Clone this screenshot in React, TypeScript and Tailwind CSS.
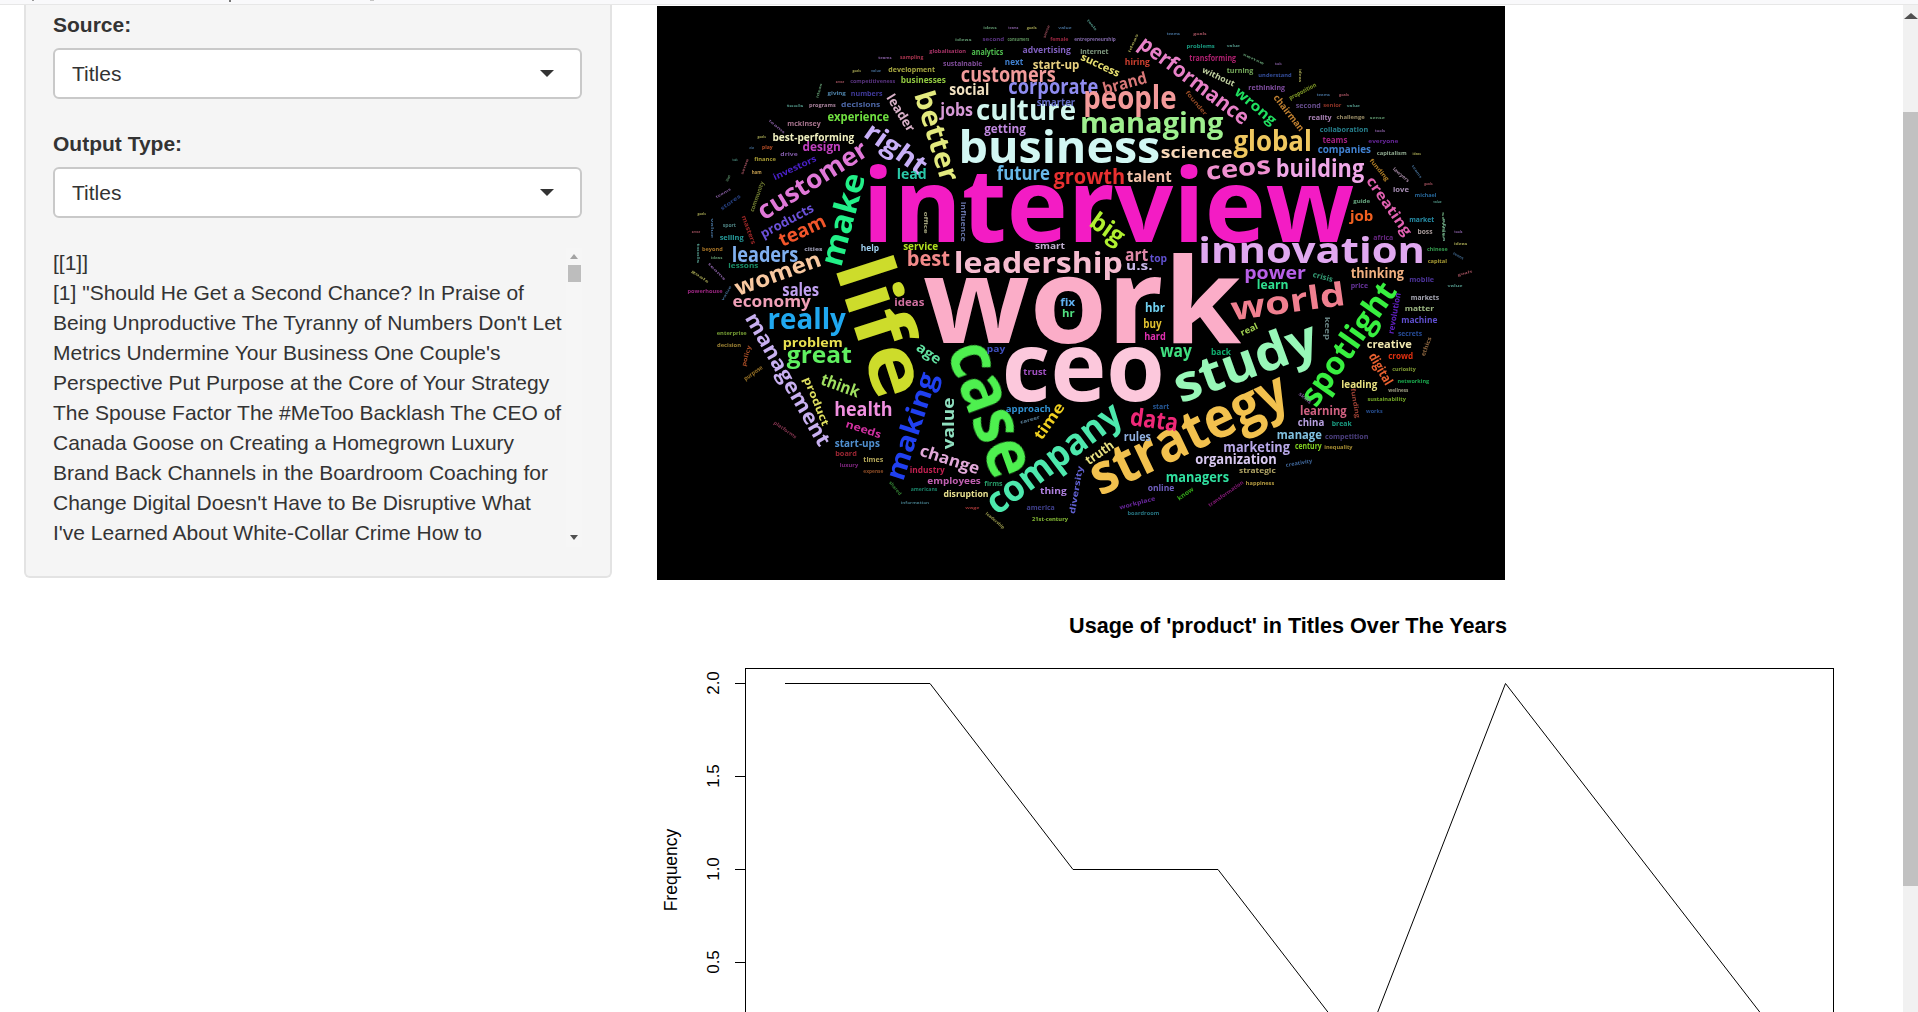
type Word = [string, number, number, number, number, number, string];

// coords below are read off the 3x crops of the picture, each block has its own origin
const topLeft: Word[] = [
  ["interview", 1375, 642, 1475, 175, 0, "#f31cc4"],
  ["business", 1228, 452, 605, 75, 0, "#d2f7f3"],
  ["leadership", 1165, 794, 507, 50, 0, "#f6bcd0"],
  ["work", 1296, 933, 954, 204, 0, "#fbadc8"],
  ["ceo", 1300, 1124, 489, 165, 0, "#fcc8dc"],
  ["life", 680, 985, 430, 135, 72, "#cddc2b"],
  ["case", 1014, 1230, 420, 118, 70, "#4ef04f"],
  ["customers", 1075, 228, 285, 35, 0, "#f29b9b"],
  ["corporate", 1210, 265, 270, 35, 0, "#8f8cf0"],
  ["culture", 1128, 335, 300, 50, 0, "#d0f5ee"],
  ["social", 958, 273, 120, 28, 0, "#f0e0c0"],
  ["jobs", 920, 335, 98, 30, 0, "#d89ad8"],
  ["better", 855, 410, 280, 48, 73, "#e3ea7e"],
  ["right", 735, 450, 210, 45, 35, "#c8b0f8"],
  ["leader", 750, 340, 125, 22, 58, "#d8b0c8"],
  ["customer", 490, 545, 375, 44, -32, "#e078d8"],
  ["make", 585, 660, 285, 54, -75, "#22f088"],
  ["lead", 785, 525, 90, 25, 0, "#2ac8a8"],
  ["future", 1120, 525, 160, 32, 0, "#68b8e8"],
  ["growth", 1318, 535, 215, 35, 0, "#e83030"],
  ["products", 412, 665, 175, 22, -28, "#6a50d8"],
  ["investors", 435, 505, 140, 15, -25, "#4a20c8"],
  ["team", 458, 695, 150, 33, -25, "#f2552a"],
  ["leaders", 345, 768, 200, 38, 0, "#80b0f0"],
  ["best", 835, 780, 130, 38, 0, "#f28a8a"],
  ["women", 385, 825, 270, 38, -20, "#f8c8a0"],
  ["sales", 452, 875, 110, 30, 0, "#c0a0f0"],
  ["design", 515, 442, 115, 20, 0, "#c040c0"],
  ["best-performing", 490, 415, 245, 18, 0, "#f0f0c0"],
  ["experience", 625, 352, 185, 20, 0, "#70e040"],
  ["decisions", 632, 315, 118, 13, 0, "#6080d0"],
  ["mckinsey", 462, 373, 100, 12, 0, "#d090b0"],
  ["businesses", 820, 242, 135, 14, 0, "#90c840"],
  ["development", 785, 212, 140, 11, 0, "#d0d050"],
  ["start-up", 1218, 198, 140, 20, 0, "#e8d080"],
  ["sustainable", 938, 193, 118, 12, 0, "#a060c0"],
  ["next", 1092, 188, 55, 14, 0, "#4080d0"],
  ["advertising", 1190, 152, 145, 15, 0, "#8060c0"],
  ["analytics", 1012, 157, 95, 14, 0, "#50c050"],
  ["globalisation", 893, 155, 110, 9, 0, "#d04080"],
  ["sampling", 785, 172, 70, 9, 0, "#d04060"],
  ["smarter", 1218, 308, 115, 18, 0, "#6068c0"],
  ["getting", 1065, 388, 125, 22, 0, "#c088e0"],
  ["service", 812, 740, 105, 18, 0, "#b0e020"],
  ["help", 660, 745, 55, 15, 0, "#a0d0f0"],
  ["smart", 1200, 740, 90, 15, 0, "#c0b0d0"],
  ["selling", 245, 715, 72, 12, 0, "#30c0c0"],
  ["lessons", 280, 800, 90, 11, 0, "#20b080"],
  ["influence", 938, 665, 120, 12, 90, "#8090d0"],
  ["numbers", 650, 284, 95, 11, 0, "#5048c0"],
  ["giving", 560, 282, 55, 9, 0, "#60a0d0"],
  ["programs", 517, 318, 80, 8, 0, "#d0a0c0"],
  ["competitiveness", 668, 245, 135, 8, 0, "#7040a0"],
  ["finance", 345, 478, 65, 8, 0, "#d0c040"],
  ["drive", 417, 463, 52, 10, 0, "#a070d0"],
  ["play", 352, 443, 32, 8, 0, "#e06030"],
  ["ham", 320, 517, 30, 8, 0, "#f0c060"],
  ["consumers", 1105, 119, 65, 8, 0, "#70b070"],
  ["female", 1228, 118, 55, 8, 0, "#c03050"],
  ["entrepreneurship", 1335, 119, 125, 8, 0, "#a080d0"],
  ["second", 1030, 119, 65, 8, 0, "#7040a0"],
  ["beyond", 187, 748, 62, 8, 0, "#d09030"],
  ["cities", 490, 750, 55, 9, 0, "#d0d0f0"],
  ["sport", 238, 678, 40, 8, 0, "#60a0a0"],
  ["powerhouse", 165, 875, 105, 8, 0, "#c030a0"],
  ["masters", 295, 690, 90, 11, 70, "#c03030"],
  ["community", 322, 590, 95, 10, -70, "#90a040"],
  ["stores", 242, 608, 70, 9, -35, "#3050a0"],
  ["office", 828, 668, 65, 10, 90, "#d0d0a0"],
  ["internet", 1333, 157, 85, 12, 0, "#a0c0a0"],
];

const topRight: Word[] = [
  ["people", 150, 300, 280, 55, 0, "#f39a9a"],
  ["managing", 215, 375, 430, 50, 0, "#9ff08f"],
  ["success", 60, 197, 125, 18, 25, "#e8e070"],
  ["big", 80, 690, 110, 42, 35, "#b0f030"],
  ["art", 170, 768, 70, 30, 0, "#e088a8"],
  ["u.s.", 178, 800, 80, 22, 0, "#c8b8e8"],
  ["top", 235, 776, 52, 18, 0, "#6050d0"],
  ["innovation", 695, 760, 680, 62, 0, "#e0a8f0"],
  ["thinking", 892, 823, 160, 24, 0, "#f0b080"],
  ["power", 585, 823, 185, 30, 0, "#b860e8"],
  ["learn", 578, 858, 95, 22, 0, "#30e090"],
  ["job", 845, 652, 70, 25, 0, "#f06020"],
  ["global", 578, 430, 235, 50, 0, "#f0c860"],
  ["ceos", 475, 510, 195, 42, -6, "#f090d0"],
  ["building", 720, 510, 265, 42, 0, "#f0a8e8"],
  ["science", 350, 462, 215, 28, 0, "#f8d8b8"],
  ["talent", 208, 532, 135, 28, 0, "#f0c0a8"],
  ["brand", 135, 253, 135, 28, -15, "#d87878"],
  ["performance", 340, 245, 395, 36, 37, "#e880c8"],
  ["wrong", 525, 320, 150, 24, 40, "#20e060"],
  ["chairman", 625, 340, 130, 16, 52, "#c08030"],
  ["hiring", 172, 187, 75, 14, 0, "#d04030"],
  ["transforming", 398, 177, 140, 15, 0, "#b02070"],
  ["without", 415, 232, 105, 14, 25, "#c0d0a0"],
  ["turning", 480, 212, 80, 13, 0, "#90d070"],
  ["problems", 362, 138, 85, 10, 0, "#20c0a0"],
  ["rethinking", 560, 265, 110, 13, 0, "#a060c8"],
  ["second", 685, 318, 75, 12, 0, "#8060b0"],
  ["reality", 720, 355, 70, 12, 0, "#d0a0e0"],
  ["collaboration", 792, 390, 145, 13, 0, "#30a0b0"],
  ["teams", 765, 422, 75, 14, 0, "#a02080"],
  ["companies", 793, 452, 160, 17, 0, "#4080d0"],
  ["creating", 925, 620, 205, 24, 55, "#e060b0"],
  ["love", 963, 570, 48, 13, 0, "#d0b0e0"],
  ["market", 1025, 660, 75, 12, 0, "#30b0d0"],
  ["africa", 910, 715, 60, 12, 0, "#8030a0"],
  ["crisis", 728, 832, 62, 13, 15, "#40c090"],
  ["mobile", 1025, 840, 75, 13, 0, "#6040c0"],
  ["price", 838, 860, 52, 11, 0, "#8040c0"],
  ["boss", 1035, 697, 45, 12, 0, "#d0c0c0"],
  ["everyone", 910, 425, 90, 8, 0, "#8030c0"],
  ["capitalism", 935, 461, 90, 8, 0, "#b0d0b0"],
  ["challenge", 812, 352, 85, 8, 0, "#c0b080"],
  ["proposition", 668, 275, 90, 10, -28, "#a0c030"],
  ["understand", 585, 227, 100, 8, 0, "#4060c0"],
  ["senior", 757, 317, 55, 8, 0, "#b04030"],
  ["founder", 348, 310, 90, 10, 50, "#c06030"],
  ["funding", 897, 510, 80, 10, 50, "#e0a030"],
  ["lawyers", 963, 525, 60, 8, 40, "#c0a0c0"],
  ["michael", 1037, 587, 65, 8, 0, "#3080c0"],
  ["guide", 845, 605, 50, 9, 0, "#80d0a0"],
  ["africa", 1092, 690, 70, 7, 90, "#80c0a0"],
  ["chinese", 1072, 748, 62, 8, 0, "#40c060"],
  ["capital", 1072, 785, 58, 8, 0, "#d0c040"],
];

const bottomLeft: Word[] = [
  ["economy", 365, 38, 235, 28, 0, "#f0a0b8"],
  ["really", 470, 95, 235, 48, 0, "#20a8f0"],
  ["management", 410, 270, 450, 35, 60, "#c8b0f0"],
  ["problem", 488, 160, 180, 22, 0, "#e8e050"],
  ["great", 508, 200, 195, 40, 0, "#60f060"],
  ["product", 497, 335, 155, 18, 68, "#e0e060"],
  ["think", 570, 290, 120, 28, 20, "#a0e060"],
  ["making", 790, 410, 335, 46, -72, "#2040f0"],
  ["health", 640, 363, 175, 32, 0, "#f090e0"],
  ["needs", 640, 420, 110, 18, 18, "#d030a0"],
  ["start-ups", 622, 463, 135, 17, 0, "#5090d0"],
  ["board", 588, 492, 65, 12, 0, "#c03040"],
  ["times", 670, 510, 60, 12, 0, "#e0d070"],
  ["change", 898, 512, 185, 28, 18, "#e0a8d8"],
  ["value", 898, 400, 155, 28, -90, "#90e0c0"],
  ["age", 835, 192, 80, 24, 35, "#60e0a0"],
  ["pay", 1038, 178, 55, 15, 0, "#4050c0"],
  ["trust", 1155, 248, 70, 15, 0, "#a050c0"],
  ["approach", 1135, 357, 135, 16, 0, "#3090d0"],
  ["time", 1200, 395, 125, 26, -55, "#f0d020"],
  ["industry", 832, 542, 105, 14, 0, "#c02050"],
  ["employees", 912, 573, 160, 16, 0, "#c060b0"],
  ["disruption", 948, 613, 135, 14, 0, "#e8e090"],
  ["firms", 1030, 583, 55, 11, 0, "#30c080"],
  ["thing", 1210, 605, 80, 16, 0, "#b080e0"],
  ["diversity", 1280, 600, 145, 14, -80, "#6060d0"],
  ["america", 1172, 655, 85, 12, 0, "#5050b0"],
  ["ideas", 778, 38, 90, 18, 0, "#d070a0"],
  ["fix", 1253, 40, 45, 18, 0, "#60b0f0"],
  ["hr", 1255, 73, 38, 18, 0, "#50e080"],
  ["21st-century", 1200, 688, 108, 10, 0, "#a0e040"],
  ["company", 1215, 510, 480, 62, -37, "#4de8ad"],
  ["policy", 290, 198, 65, 10, -75, "#d06030"],
  ["purpose", 310, 250, 65, 10, -35, "#c09030"],
  ["enterprise", 245, 130, 90, 8, 0, "#90c040"],
  ["decision", 237, 167, 72, 8, 0, "#c0a040"],
  ["platforms", 405, 420, 80, 8, 35, "#a04060"],
  ["luxury", 597, 527, 55, 8, 0, "#a030a0"],
  ["expense", 670, 546, 60, 8, 0, "#b06030"],
  ["shared", 735, 595, 50, 8, 50, "#40a040"],
  ["americans", 822, 600, 80, 8, 0, "#20a080"],
  ["information", 795, 638, 85, 7, 0, "#5090a0"],
  ["career", 1140, 390, 60, 8, -15, "#70a0c0"],
  ["leadership", 1035, 692, 70, 7, 40, "#c0c060"],
  ["wage", 967, 653, 42, 7, 0, "#c04040"],
];

const bottomRight: Word[] = [
  ["strategy", 330, 440, 640, 96, -25.5, "#f2c14e"],
  ["study", 500, 225, 450, 86, -20, "#98f7b8"],
  ["spotlight", 810, 165, 430, 54, -55, "#38f040"],
  ["world", 625, 42, 345, 55, -8, "#f08090"],
  ["markets", 1035, 25, 85, 12, 0, "#d0d0e0"],
  ["matter", 1018, 57, 88, 13, 0, "#c0e0a0"],
  ["machine", 1018, 92, 108, 14, 0, "#6050d0"],
  ["secrets", 990, 133, 72, 12, 0, "#3060c0"],
  ["revolution", 945, 70, 125, 14, -80, "#6020c0"],
  ["creative", 928, 165, 135, 19, 0, "#f0e8b0"],
  ["crowd", 962, 200, 75, 16, 0, "#e03010"],
  ["digital", 900, 238, 105, 22, 60, "#e86030"],
  ["leading", 838, 285, 108, 18, 0, "#e8e080"],
  ["learning", 730, 365, 140, 20, 0, "#d06080"],
  ["china", 693, 400, 80, 17, 0, "#b8a0e0"],
  ["break", 785, 402, 60, 13, 0, "#20c0a0"],
  ["manage", 658, 437, 135, 20, 0, "#80c0e0"],
  ["competition", 800, 440, 130, 12, 0, "#6050a0"],
  ["marketing", 530, 475, 200, 25, 0, "#b8a8e8"],
  ["century", 685, 470, 80, 14, 0, "#80d020"],
  ["inequality", 775, 473, 85, 8, 0, "#d0b040"],
  ["organization", 468, 510, 245, 24, 0, "#d8c8f0"],
  ["strategic", 532, 543, 110, 13, 0, "#e0d080"],
  ["managers", 352, 565, 190, 24, 0, "#30e0a0"],
  ["online", 243, 596, 80, 14, 0, "#7060c0"],
  ["data", 222, 395, 145, 42, 8, "#f02878"],
  ["rules", 172, 443, 82, 20, 0, "#90b0e0"],
  ["truth", 60, 490, 95, 22, -35, "#e8e080"],
  ["way", 288, 187, 95, 30, 0, "#40e080"],
  ["back", 423, 188, 60, 15, 0, "#10b070"],
  ["hbr", 225, 57, 60, 20, 0, "#70d0f0"],
  ["buy", 217, 103, 55, 20, 0, "#e0c030"],
  ["hard", 225, 140, 65, 18, 0, "#e030b0"],
  ["real", 508, 120, 55, 15, -25, "#a0d050"],
  ["start", 243, 350, 50, 12, 0, "#3070c0"],
  ["keep", 740, 115, 70, 13, 90, "#80a0a0"],
  ["workplace", 172, 640, 110, 10, -15, "#8030c0"],
  ["transformation", 438, 612, 125, 9, -35, "#a02090"],
  ["sustainability", 920, 328, 115, 8, 0, "#90d030"],
  ["networking", 1000, 275, 95, 8, 0, "#20d060"],
  ["boardroom", 190, 671, 95, 8, 0, "#3090a0"],
  ["creativity", 657, 520, 80, 9, -10, "#5080c0"],
  ["happiness", 540, 581, 85, 8, 0, "#e0c050"],
  ["know", 317, 612, 55, 11, -35, "#40d020"],
  ["works", 883, 365, 50, 8, 0, "#3060b0"],
  ["funding", 825, 340, 90, 11, 80, "#c05040"],
  ["curiosity", 972, 239, 70, 8, 0, "#a0c040"],
  ["wellness", 955, 302, 60, 8, 0, "#c0c0a0"],
  ["ethics", 1040, 170, 60, 10, -70, "#b08050"],
  ["skills", 675, 325, 45, 9, 40, "#9060b0"],
];

// the tiny specks round the rim of the cloud, too small to read in the picture
const rimLeft: [number, number, number, number][] = [
  [1020, 85, 40, 0], [1090, 85, 30, 0], [1145, 85, 30, 0], [1245, 85, 40, 0], [1190, 95, 40, -70],
  [1325, 75, 40, 50], [940, 120, 50, 0], [705, 175, 40, 0], [620, 212, 25, 0], [678, 212, 30, 0],
  [570, 245, 25, 0], [435, 318, 50, 0], [508, 272, 45, -75], [380, 380, 60, 40], [335, 410, 25, 0],
  [305, 443, 15, 0], [285, 500, 50, -70], [255, 480, 15, 0], [235, 535, 20, -70], [220, 580, 50, -30],
  [155, 642, 25, 0], [185, 685, 60, 90], [138, 697, 25, 0], [145, 760, 60, 90], [200, 775, 35, 0],
  [200, 815, 70, 45], [150, 830, 60, 35], [230, 880, 50, -60],
];
const rimRight: [number, number, number, number][] = [
  [160, 130, 60, -65], [280, 103, 40, 0], [360, 103, 40, 0], [460, 138, 40, 0], [520, 177, 70, 25],
  [595, 192, 20, 0], [660, 227, 40, 90], [730, 284, 40, 0], [792, 284, 30, 0], [820, 318, 40, 0],
  [892, 355, 45, 0], [900, 392, 30, 0], [1010, 463, 25, 0], [1010, 515, 45, 55], [1045, 553, 25, 0],
  [1072, 607, 25, 0], [1090, 675, 80, 90], [1135, 697, 25, 0], [1142, 733, 40, 0], [1135, 768, 35, 30],
  [1155, 820, 45, -15], [1125, 858, 45, 0],
];
const rimColors = ["#70b080", "#a070c0", "#c0c060", "#5080b0", "#c06070", "#60b0a0"];
const rimWord = (i: number): string => ["ideas", "teams", "goals", "value", "sense", "tools"][i % 6];

const blocks: [Word[], number, number][] = [
  [topLeft, 650, 0],
  [topRight, 1080, 0],
  [bottomLeft, 650, 290],
  [bottomRight, 1080, 290],
  [rimLeft.map(([x, y, len, a], i) => [rimWord(i), x, y, len, 6, a, rimColors[i % 6]] as Word), 650, 0],
  [rimRight.map(([x, y, len, a], i) => [rimWord(i), x, y, len, 6, a, rimColors[(i + 2) % 6]] as Word), 1080, 0],
];

function WordCloud() {
  return (
    <svg viewBox="657 6 848 574" className="block h-[574px] w-[848px] bg-black">
      <g className="blur-[0.7px]" fontFamily="'Open Sans', sans-serif" fontWeight={700} textAnchor="middle">
        {blocks.flatMap(([words, ox, oy]) =>
          words.map(([word, zx, zy, len, xh, angle, color]) => {
            const x = ox + zx / 3;
            const y = oy + zy / 3;
            const size = xh / 3 / 0.57;
            return (
              <text
                key={`${ox}-${oy}-${word}-${zx}-${zy}`}
                transform={`translate(${x} ${y}) rotate(${angle})`}
                y={size * 0.27}
                fontSize={size}
                fill={color}
                opacity={xh <= 13 ? 0.8 : 1}
                textLength={len / 3}
                lengthAdjust="spacingAndGlyphs"
              >
                {word}
              </text>
            );
          }),
        )}
      </g>
    </svg>
  );
}

function UsagePlot() {
  const ticks: [string, number][] = [
    ["2.0", 683],
    ["1.5", 776],
    ["1.0", 869],
    ["0.5", 962],
  ];
  return (
    <svg viewBox="657 580 1246 432" className="block h-[432px] w-[1246px]" fontFamily="'Liberation Sans', Arial, sans-serif">
      <text x={1288} y={633} textAnchor="middle" fontSize={21.6} fontWeight={700} fill="#000">
        Usage of 'product' in Titles Over The Years
      </text>
      <rect x={745.5} y={668.5} width={1088} height={400} fill="none" stroke="#000" strokeWidth={1} />
      {ticks.map(([label, y]) => (
        <g key={label}>
          <line x1={735} y1={y + 0.5} x2={745} y2={y + 0.5} stroke="#000" />
          <text transform={`translate(719 ${y}) rotate(-90)`} textAnchor="middle" fontSize={17} fill="#000">
            {label}
          </text>
        </g>
      ))}
      <text transform="translate(677 870) rotate(-90)" textAnchor="middle" fontSize={17.5} fill="#000">
        Frequency
      </text>
      <polyline
        points="785,683.5 930,683.5 1073,869.5 1218,869.5 1361,1055 1505.5,683.5 1793,1055"
        fill="none"
        stroke="#000"
        strokeWidth={1}
      />
    </svg>
  );
}

function SelectBox({ value }: { value: string }) {
  return (
    <div className="flex h-[51px] items-center justify-between rounded-[6px] border-2 border-[#c9c9c9] bg-white pr-[26px] pl-[17px]">
      <span>{value}</span>
      <span className="h-0 w-0 border-x-[7px] border-t-[7px] border-x-transparent border-t-[#333333]" />
    </div>
  );
}

const titles =
  "[1] \"Should He Get a Second Chance? In Praise of Being Unproductive The Tyranny of Numbers Don't Let Metrics Undermine Your Business One Couple's Perspective Put Purpose at the Core of Your Strategy The Spouse Factor The #MeToo Backlash The CEO of Canada Goose on Creating a Homegrown Luxury Brand Back Channels in the Boardroom Coaching for Change Digital Doesn't Have to Be Disruptive What I've Learned About White-Collar Crime How to";

function Sidebar() {
  return (
    <aside className="ml-[24px] h-[573px] w-[588px] shrink-0 rounded-b-[6px] border-2 border-t-0 border-[#e3e3e3] bg-[#f5f5f5] pt-[5px] pr-[28px] pl-[27px] text-[21px] leading-[30px] text-[#333333]">
      <label className="block font-bold">Source:</label>
      <div className="mt-[8px]">
        <SelectBox value="Titles" />
      </div>
      <label className="mt-[30px] block font-bold">Output Type:</label>
      <div className="mt-[8px]">
        <SelectBox value="Titles" />
      </div>
      <div className="relative mt-[30px] h-[300px]">
        <div className="h-full w-[512px]">
          [[1]]
          <br />
          {titles}
        </div>
        <div className="absolute top-0 right-0 bottom-[1px] flex w-[16px] flex-col items-center bg-[#f6f6f6]">
          <span className="mt-[6px] h-0 w-0 border-x-[4px] border-b-[5px] border-x-transparent border-b-[#a3a3a3]" />
          <span className="mt-[6px] h-[17px] w-[13px] bg-[#bdbdbd]" />
          <span className="mt-auto mb-[7px] h-0 w-0 border-x-[4px] border-t-[5px] border-x-transparent border-t-[#505050]" />
        </div>
      </div>
    </aside>
  );
}

export default function App() {
  return (
    <div className="flex h-[1012px] w-[1918px] flex-col overflow-hidden bg-white font-['Liberation_Sans',Arial,sans-serif]">
      <div className="flex h-[5px] shrink-0 items-start border-b border-[#e7e7e7] bg-[#f9f9fb]">
        <span className="ml-[32px] h-[1px] w-[2px] bg-[#9a9a9a]" />
        <span className="ml-[195px] h-[2px] w-[2px] bg-[#777777]" />
        <span className="ml-[139px] h-[1px] w-[4px] bg-[#c4c4c4]" />
      </div>
      <div className="flex min-h-0 flex-1">
        <Sidebar />
        <main className="ml-[45px] w-[1246px] shrink-0 pt-px">
          <WordCloud />
          <UsagePlot />
        </main>
        <div className="flex w-[15px] shrink-0 flex-col items-center bg-[#f1f1f1]">
          <span className="mt-[8px] h-0 w-0 border-x-[7px] border-b-[6px] border-x-transparent border-b-[#505050]" />
          <span className="mt-[93px] h-[774px] w-full bg-[#c1c1c1]" />
        </div>
      </div>
    </div>
  );
}
